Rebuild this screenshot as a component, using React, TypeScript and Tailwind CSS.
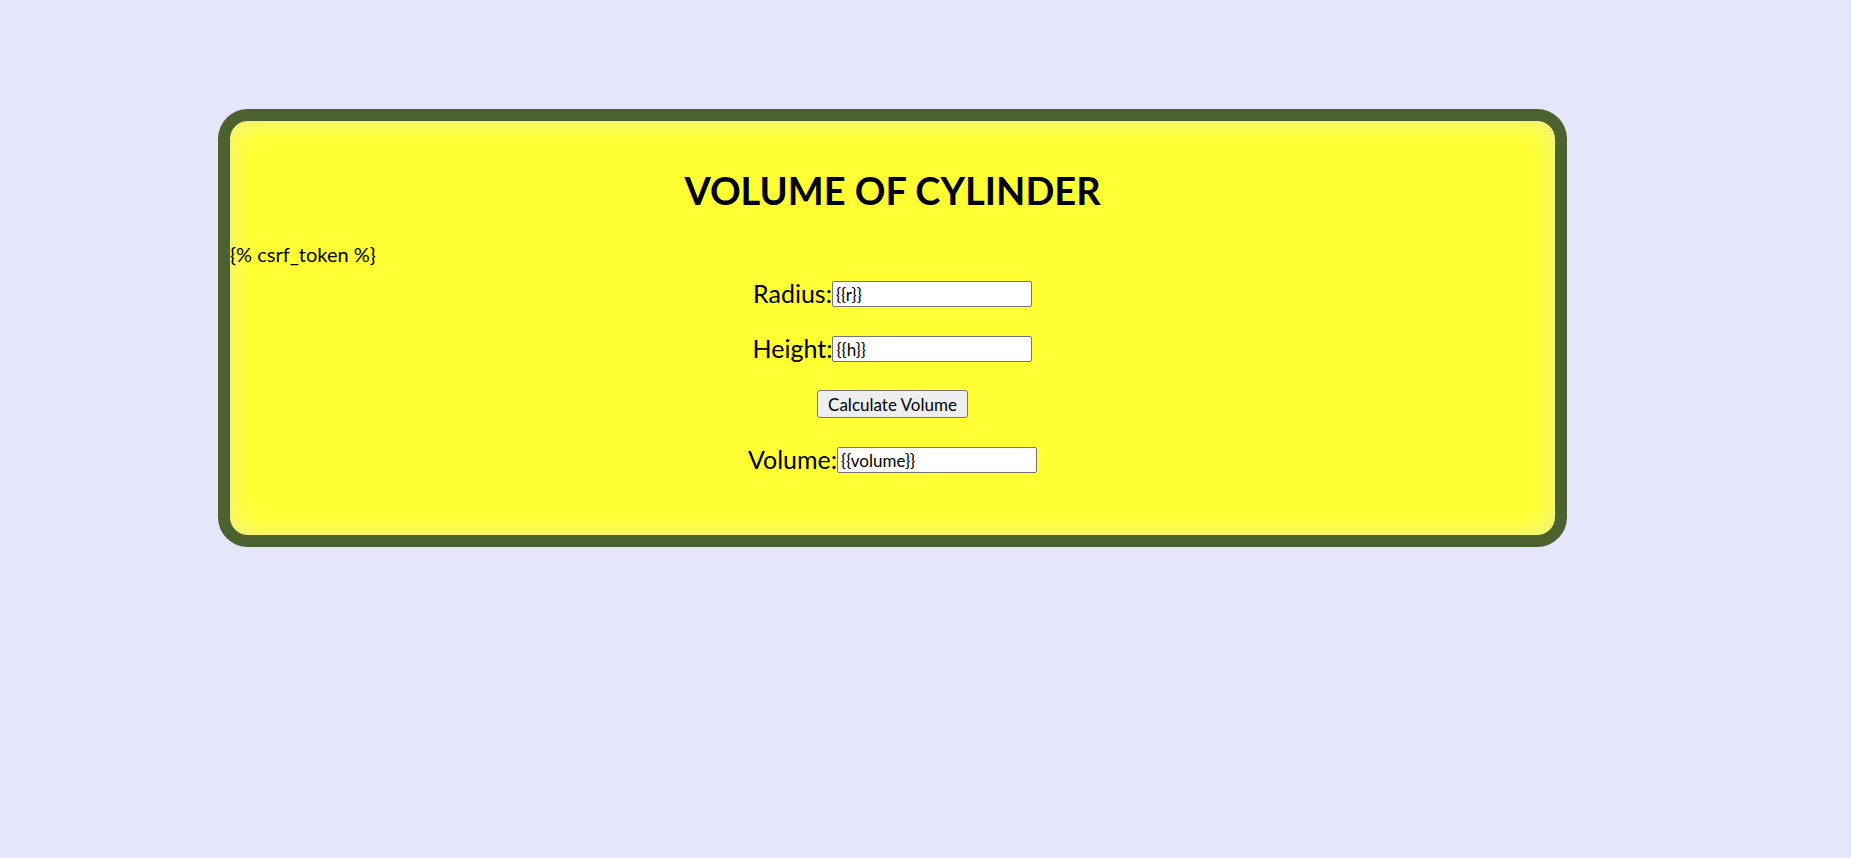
export default function App() {
  const font = { fontFamily: "Lato, 'Open Sans', sans-serif" };
  return (
    <div className="min-h-[858px] w-full bg-[#e6e6fa] pt-[109px]" style={font}>
      <div className="ml-[218px] w-[1349px] h-[438px] rounded-[30px] border-[12px] border-[#4b6130] bg-[#ffff33] shadow-[inset_0_0_24px_#eeeea0] text-black">
        <h1 className="pt-[45px] text-center text-[38px] font-bold leading-[48px]">VOLUME OF CYLINDER</h1>
        <form className="mt-[28px]" onSubmit={(e) => e.preventDefault()}>
          <div className="text-[20px] leading-[24px]">{"{% csrf_token %}"}</div>
          <div className="mt-[14px] flex flex-col items-center gap-[28px]">
            <div className="flex items-end h-[27px]">
              <label className="text-[25px] leading-[28px]">Radius:</label>
              <input defaultValue="{{r}}" className="w-[200px] h-[26px] bg-white border border-[#767676] rounded-[2px] px-[3px] text-[17px]" />
            </div>
            <div className="flex items-end h-[27px]">
              <label className="text-[25px] leading-[28px]">Height:</label>
              <input defaultValue="{{h}}" className="w-[200px] h-[26px] bg-white border border-[#767676] rounded-[2px] px-[3px] text-[17px]" />
            </div>
            <button type="submit" className="h-[28px] px-[10px] bg-[#efefef] border border-[#767676] rounded-[3px] text-[17px] leading-none">Calculate Volume</button>
            <div className="flex items-end h-[27px]">
              <label className="text-[25px] leading-[28px]">Volume:</label>
              <input defaultValue="{{volume}}" className="w-[200px] h-[26px] bg-white border border-[#767676] rounded-[2px] px-[3px] text-[17px]" />
            </div>
          </div>
        </form>
      </div>
    </div>
  );
}
